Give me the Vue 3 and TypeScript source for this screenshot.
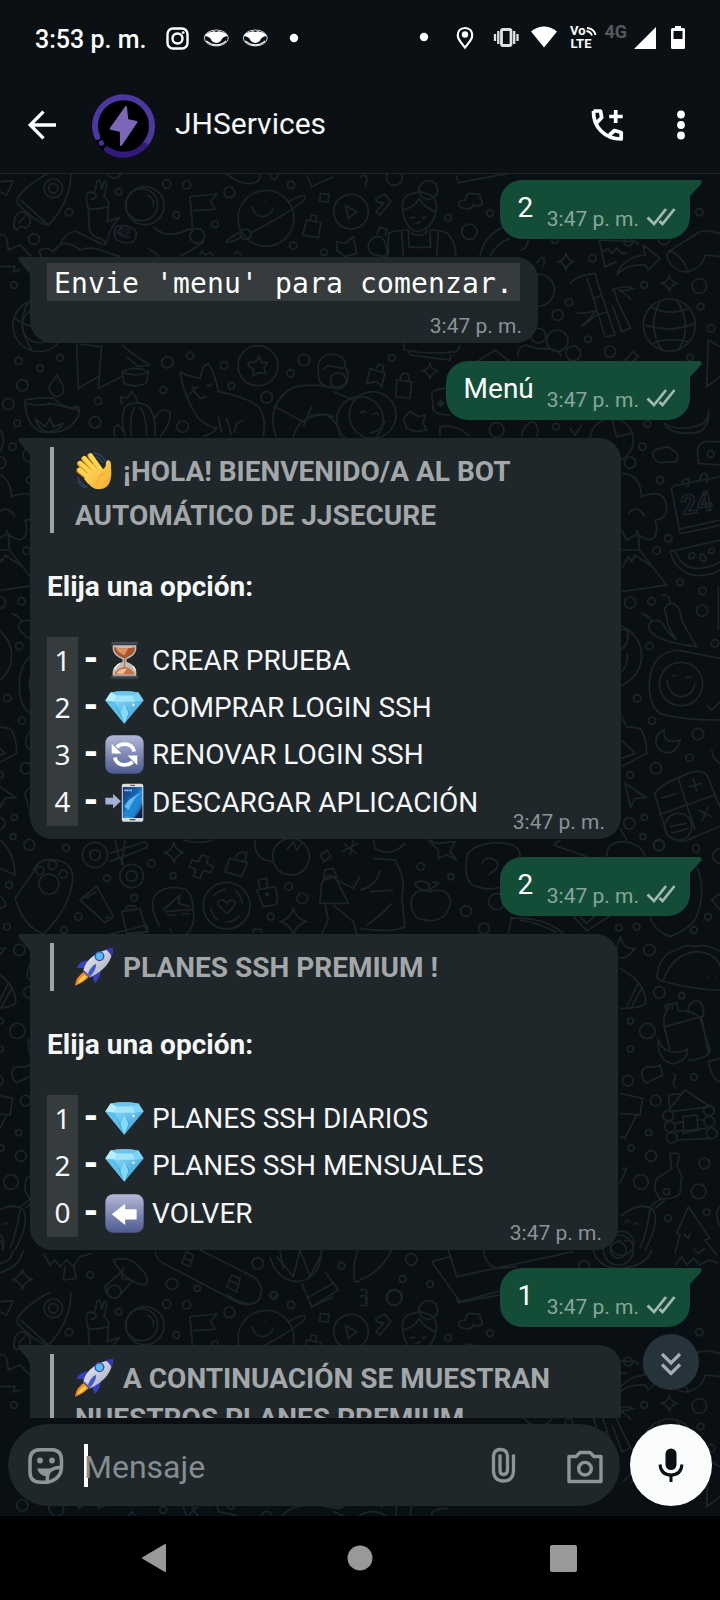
<script setup lang="ts">
interface Option { key: string; icon: string; label: string }
interface Message {
  id: number
  side: 'in' | 'out'
  kind: 'text' | 'code' | 'menu'
  text?: string
  width?: number
  quoteIcon?: string
  quote?: string[]
  tight?: boolean
  options?: Option[]
}
interface Doodle { x: number; y: number; circles: number[][]; d: string }

const time = '3:47 p. m.'

const viewBoxes: Record<string, string> = {
  wave: '226 62 116 120',
  hourglass: '314 632 116 118',
  gem: '313 774 119 119',
  refresh: '314 914 116 116',
  phone: '313 1055 116 116',
  back: '314 1058 116 116',
  rocket: '227 322 118 118',
}

const messages: Message[] = [
  { id: 1, side: 'out', kind: 'text', text: '2' },
  { id: 2, side: 'in', kind: 'code', text: "Envie 'menu' para comenzar.", width: 508 },
  { id: 3, side: 'out', kind: 'text', text: 'Menú' },
  {
    id: 4, side: 'in', kind: 'menu', width: 591, quoteIcon: 'wave',
    quote: ['¡HOLA! BIENVENIDO/A AL BOT', 'AUTOMÁTICO DE JJSECURE'],
    options: [
      { key: '1', icon: 'hourglass', label: 'CREAR PRUEBA' },
      { key: '2', icon: 'gem', label: 'COMPRAR LOGIN SSH' },
      { key: '3', icon: 'refresh', label: 'RENOVAR LOGIN SSH' },
      { key: '4', icon: 'phone', label: 'DESCARGAR APLICACIÓN' },
    ],
  },
  { id: 5, side: 'out', kind: 'text', text: '2' },
  {
    id: 6, side: 'in', kind: 'menu', width: 588, quoteIcon: 'rocket',
    quote: ['PLANES SSH PREMIUM !'],
    options: [
      { key: '1', icon: 'gem', label: 'PLANES SSH DIARIOS' },
      { key: '2', icon: 'gem', label: 'PLANES SSH MENSUALES' },
      { key: '0', icon: 'back', label: 'VOLVER' },
    ],
  },
  { id: 7, side: 'out', kind: 'text', text: '1' },
  {
    id: 8, side: 'in', kind: 'menu', width: 591, quoteIcon: 'rocket', tight: true,
    quote: ['A CONTINUACIÓN SE MUESTRAN', 'NUESTROS PLANES PREMIUM'],
  },
]

// Four-pointed sparkle centred on (x, y).
const spark = (x: number, y: number, r: number): string => {
  const k = r * 0.25
  return `M${x} ${y - r}Q${x + k} ${y - k} ${x + r} ${y}Q${x + k} ${y + k} ${x} ${y + r}Q${x - k} ${y + k} ${x - r} ${y}Q${x - k} ${y - k} ${x} ${y - r}Z`
}

// Wallpaper doodles, drawn at three units per pixel. These repeat down the page.
const repeating: Doodle[] = [
  {
    x: 0, y: 170,
    circles: [[500,42,12],[560,45,12],[356,65,10],[688,67,16],[645,163,10],[529,135,10],[207,127,11],[102,207,16],[880,227,11],[972,247,10],[873,45,11],[822,17,11],[160,55,14],[160,55,28],[425,104,48],[435,107,57],[798,145,84],[737,193,16],[1053,125,52],[592,198,22],[42,345,10],[343,5,20],[56,573,11],[120,595,10],[180,563,10],[67,646,17],[25,702,17],[294,693,11],[285,757,17],[51,760,10],[502,577,17],[570,557,11],[672,587,11],[490,660,10],[774,587,60],[694,647,10],[800,682,17],[872,610,11],[912,570,17],[548,770,17],[1080,750,70],[1015,632,24]],
    d: 'M55 80C70 60 110 25 150 8M212 8C215 60 190 120 145 165C120 165 70 120 52 100Q50 85 55 80M60 88L145 165M60 125Q40 140 45 150Q35 170 50 180Q65 160 75 175Q90 170 92 150Q85 130 60 125M55 160L75 140M265 115Q255 90 262 70Q275 60 290 75Q285 90 270 88M285 65L290 35Q297 25 303 40L305 60L312 35Q320 30 320 45L312 80Q330 90 325 110Q290 120 265 115L268 180Q275 200 300 205Q320 215 313 225M325 110L322 155L360 142Q340 160 330 185L315 225M350 170Q380 160 405 180Q415 195 400 215Q380 225 350 210Q335 190 350 170M460 170Q500 210 560 180Q580 170 575 190M612 215Q580 240 540 258M310 225L230 185Q200 180 180 225L160 245Q130 225 118 245L125 262M160 245Q190 200 240 240Q270 225 330 250L360 260M445 235L480 260M578 175L570 80L650 72L632 95L645 118L578 122M865 95Q920 65 915 85Q900 110 750 190M720 185Q670 215 680 218Q700 215 722 203M755 108Q765 140 790 140Q815 135 820 112M775 95v3M795 93v3M920 150L962 158L955 203L908 195ZM930 150L935 135L950 138L948 155M1038 108L1070 125L1045 145ZM1010 215L1035 220L1060 200L1070 250L1035 260L1010 240ZM962 70l25 3l-3 23l-25-3zM920 15L935 50L1000 20M680 12Q720 45 760 40Q785 30 780 12M0 35L40 32L20 75L0 65M0 195Q18 190 20 210L25 240L60 225L95 260M0 290L45 290L40 305L60 300M440 75Q465 85 460 110M600 255l5-12l10 12l15-8l10 10M700 255l10-10l15 10M235 522L300 530M230 522L235 655L295 620M305 525L295 655L365 620M365 525L410 560L448 585L415 590L380 560M366 605Q405 585 446 605Q405 625 366 605L372 640Q405 655 438 640L446 605M75 690Q120 680 165 685M75 690Q75 760 120 785Q170 795 210 770Q245 740 235 710Q200 720 165 690M80 700Q120 710 150 700L235 720M165 680Q140 660 150 645L170 615Q195 650 190 665Q185 680 165 680M105 745Q120 790 150 785Q180 780 190 760L160 770L150 745L135 770L105 745M375 800Q360 740 375 710Q400 690 440 705Q470 730 465 800M395 800Q385 740 405 710M440 800Q440 740 420 710M365 705L362 680L380 685L395 665L410 685L410 700M465 745Q480 710 510 725Q515 760 480 800M345 800Q335 770 355 765L375 790M540 605L560 615L600 625L610 590L625 580Q645 610 655 665M540 605Q545 640 560 680L585 730Q600 760 650 775Q640 790 610 800M655 665Q740 680 775 710Q800 740 790 800M575 650q10 10 20 0M620 645q10 8 15-5M560 685L580 660L600 685L620 680M655 740L665 790M680 745L695 795M730 750Q700 760 705 790M750 575l17 2l10-17l8 17l17 0l-10 17l5 17l-20-3l-17 8l0-20l-17-10zM955 600Q950 560 990 552Q1040 555 1035 590Q1050 610 1040 640Q1010 660 980 650Q950 640 955 600M970 600Q980 580 1000 590L1030 595M980 650Q940 640 890 650Q850 660 825 710L910 755M825 710Q810 760 830 800M1000 665L1060 690M910 755Q940 720 1000 740M935 710L910 770M880 800Q900 730 980 735Q1020 760 1020 800',
  },
  {
    x: 360, y: 170,
    circles: [[103,22,24],[205,60,28],[390,130,10],[265,143,10],[328,185,23],[805,215,13],[912,207,17],[697,265,11],[853,345,10],[1018,348,22],[627,397,11],[593,435,16],[684,508,10],[750,545,17],[1022,410,10],[928,465,78],[1053,475,11],[1018,127,11],[990,563,10],[535,497,22],[592,512,32],[640,550,22],[95,563,10],[38,735,70],[588,770,10],[410,780,22],[862,762,10],[535,360,48],[585,210,10],[755,810,65],[242,700,6]],
    d: 'M288 15L295 38L445 10M48 85L75 72L92 95L60 135L48 125L70 100L50 95ZM0 20Q20 10 22 30Q10 45 22 50M130 130Q120 85 145 75Q180 55 220 80Q235 105 225 135M130 120Q165 110 178 85Q190 110 225 125M130 130Q140 180 175 185Q215 175 225 135M150 140q8 8 15 0M185 140q8 8 15 0M165 158q8 5 15-3M155 185Q155 195 180 195Q200 195 200 180M85 255L85 190Q110 180 145 180L148 232L212 232L210 180Q240 180 262 190Q285 210 288 258M125 185L130 258M235 185L230 258M80 258Q20 260 25 225Q30 200 60 200Q85 215 80 258M50 195L60 172L80 178L75 198M300 110Q290 90 315 90Q320 65 345 72Q365 70 360 85Q370 90 365 105Q350 110 340 105Q330 125 300 110ZM360 258Q370 200 430 170M390 258Q410 220 450 205M480 240Q500 240 505 210M530 280Q560 240 550 290M718 210L735 290L770 275M730 245L745 235L755 250L770 235L785 250L800 250M718 210L830 215L835 225M770 315Q790 260 855 255L850 225L900 265L865 300L855 285Q800 280 770 315ZM920 250Q940 235 970 275L985 305Q960 310 935 285Q915 260 925 245L1020 185Q1040 180 1080 190M985 305Q1030 290 1035 255L1080 260M630 340Q650 315 705 310L715 345L765 495L735 500L690 350L680 325M700 385L728 375M715 435L742 425M760 355L775 400L812 475L785 485L757 405M755 360Q790 345 820 355Q800 365 775 360Q805 375 812 390M650 430Q690 430 710 420Q690 445 665 470Q690 450 715 430M870 410Q930 440 985 415M855 465Q930 490 1005 460M875 520Q930 500 985 515M900 395Q860 470 905 540M950 390Q1000 470 955 540M130 520L135 540Q200 555 290 545L300 525M148 545L150 555L270 570L272 555M350 575L405 540L450 575M475 560Q470 530 500 525Q530 540 560 535Q600 540 605 560M1045 510L1040 650L1080 620M1045 510L1080 530M790 575L820 545L835 560L810 580M30 595L75 610L65 650L50 635L20 640ZM50 595L55 582L70 588L68 605M110 630L155 635L150 685L108 680ZM120 628Q125 605 140 610Q150 615 145 632M265 655Q225 655 215 670L220 720Q230 735 270 735M230 700h24M242 688v24M130 745L150 725L175 740L195 735L190 760L200 780L165 785L140 775ZM0 730q10-12 20 0M38 735q10-12 20 0M30 790Q70 780 75 750M240 800V770Q290 760 330 800M485 800Q490 760 520 755Q540 770 530 800M630 775L645 795L665 765M755 745L770 800L815 790M910 760Q960 790 1030 760Q1050 740 1045 720M915 770Q960 800 1020 785Q1050 760 1045 730' + spark(618, 275, 22) + spark(928, 340, 22) + spark(210, 603, 22),
  },
]

const single: Doodle[] = [
  {
    x: 360, y: 430,
    circles: [[848,50,11],[810,98,17],[900,150,11],[925,325,11],[890,362,11],[960,457,10],[1028,483,11],[810,518,17],[874,514,11],[1026,542,17],[1065,640,11],[868,648,11],[832,805,11],[876,872,11],[963,762,65],[1014,912,17],[988,983,11],[888,1015,17],[810,1035,10],[808,1180,17],[853,1162,9],[849,1220,9],[897,1247,16],[750,677,95],[1052,72,10],[955,1190,40]],
    d: 'M880 80Q875 55 905 55Q925 45 940 62Q960 70 950 95Q920 95 905 98Q885 95 880 80M1080 35L1035 35Q1015 40 1012 60L1015 100L1080 105M960 310Q970 310 1080 285M960 310L935 180Q935 165 955 165L1080 140M965 165Q965 145 985 145Q990 165 980 170M1020 150Q1020 130 1035 130Q1050 145 1040 160M955 298L1080 270M785 130Q840 130 845 200Q920 170 920 240Q915 270 885 270Q900 320 870 330Q830 320 830 300M805 250Q830 220 855 260M785 300L800 330L835 310L838 360L920 465L785 485M785 360L838 360M785 415L805 380L815 395L825 375L870 405M930 365L1080 330M930 365Q950 430 1010 437Q1060 435 1080 420M945 365Q970 420 1020 415Q1060 410 1080 395M985 385q5-25 18-15q5 20-18 15M1022 370q18 5 15 22q-20 5-15-22M1045 370q0-15 15-15q10 15-15 15M845 550Q870 560 875 575Q850 590 890 620Q930 640 1010 650Q980 600 965 570Q960 520 930 520Q905 530 920 560Q920 590 950 630M905 495Q930 490 930 520M875 575Q900 560 920 600Q935 620 950 630M870 740Q880 670 950 660L1080 685M870 740Q860 820 900 850Q960 870 1080 870M920 750Q930 800 965 800Q1000 795 1005 760M935 740q8-10 18 0M978 745q8-10 18 0M1040 825L1055 840L1080 815M785 860L800 890L840 895Q860 920 860 970L785 1010M785 930L825 970L785 985M915 898Q885 910 888 940Q895 970 930 968Q955 960 960 930Q930 940 917 925Q908 910 915 898M795 1060L858 1103L825 1105L812 1132ZM885 1095Q880 1070 1000 1025Q1040 1020 1045 1045L1080 1130M885 1095L920 1210Q940 1235 970 1235L1080 1190M955 1045L1005 1200M895 1155L1065 1095M905 1105L950 1090M985 1070L1025 1060M1000 1045L1010 1085M1015 1140L1055 1160M1045 1130L1025 1175M930 1190L980 1180M935 1210L985 1195M1055 960Q1060 990 1080 1000M1075 470V600M780 600Q815 590 800 640L780 665M802 670Q805 710 780 730M780 1195L800 1230',
  },
  {
    x: 0, y: 840,
    circles: [[88,15,16],[198,23,10],[27,135,10],[147,132,30],[120,92,12],[157,75,13],[190,102,12],[285,45,16],[285,45,38],[395,108,16],[395,108,35],[454,70,11],[321,115,10],[403,173,10],[235,230,11],[192,270,10],[21,260,10],[519,107,9],[866,140,11],[907,175,16],[812,230,10],[680,197,70],[873,50,55],[802,163,4]],
    d: 'M45 175L100 95Q110 60 150 58Q215 60 218 110Q215 200 130 282Q70 260 45 175M330 40L435 5Q450 15 435 25L330 65M345 0L355 45L372 75M375 0L365 75M240 180L290 138L340 230L315 248ZM255 175L290 155M315 235l15-5M365 215L420 205L440 275L380 280ZM320 285L440 255L445 275L380 290M375 210Q380 190 410 200M480 260Q440 190 470 160Q510 130 560 150Q580 170 578 210Q590 250 560 282M490 210L540 165L535 190L570 200M495 215L575 208M500 225h30M545 222h25M510 265L515 280M575 60L595 65L605 45L625 50L620 70L640 80L632 98L610 92L600 115L580 108L588 88L568 80ZM690 55L742 68L725 110L675 95ZM705 55Q715 30 740 38L735 65M680 220L655 195Q650 180 665 180Q675 180 680 190Q690 175 703 183Q712 195 680 220M640 170Q655 148 680 148M720 225Q705 246 680 246M632 205Q640 235 655 240M728 190Q720 160 705 153M770 150L825 140Q840 185 825 195L790 200ZM780 148L775 120L800 115L802 143M765 0Q760 60 820 65M860 30L880 5L890 30L905 10M960 45l22-15l10 20l-20 15zM960 190L965 130Q990 90 1010 120L1045 190ZM975 192L985 240L965 282M1000 195L1060 245L1070 282M1010 120L1060 145L1080 110M975 90L1000 85L1010 110L970 120ZM1030 10l40 30M1060 0l-10 45M1025 35l50-25M0 0Q45 40 45 105L0 85M0 170Q20 180 15 200L0 205M760 280v-12h25v12M550 0Q600 15 640 0' + spark(522, 38, 28) + spark(880, 245, 38),
  },
  {
    x: 360, y: 840,
    circles: [[182,80,11],[273,110,9],[318,213,16],[372,265,16],[897,15,16],[1008,25,11],[1044,230,10],[777,263,10],[830,260,10],[1002,270,10],[868,330,17],[898,457,17],[965,467,9],[811,543,9],[862,573,23],[811,627,9],[803,722,16],[1002,711,10],[887,782,16],[866,878,9],[813,924,9],[873,948,16],[1033,970,16],[843,1026,22],[1016,1054,22],[924,1135,10],[1040,1117,10],[925,827,16],[930,860,16],[935,893,16],[1047,812,16],[1048,845,16],[1055,880,16],[920,1055,9],[1080,48,22],[410,185,24],[785,1210,36]],
    d: 'M40 55Q100 60 105 60Q140 120 125 170L135 260Q100 280 0 265M60 90Q50 140 0 150M30 155L100 150M95 190Q60 230 20 255M40 0L45 25Q90 55 135 10M205 0L230 10L285 5L270 35L290 60L260 45L235 55L235 30ZM320 55Q320 20 400 8Q470 5 480 40L470 120Q400 160 350 140Q310 130 320 55M365 75Q370 50 395 55Q420 65 410 85L385 105M210 155Q160 140 152 190Q160 240 190 238Q210 245 225 240Q265 235 272 180Q260 140 210 155M210 155L205 130Q170 115 165 135Q185 155 210 150L235 130L215 125M455 230L445 280M455 235Q550 230 610 280M480 240Q540 250 590 278M640 230L680 272L750 228M660 230L680 250L705 228M870 228Q880 270 930 290Q1000 260 1010 228Q1040 150 1010 80M580 15L680 50M580 15L600 0M740 50Q740 0 800 5Q850 20 855 50M1080 160L1055 180L1080 210M782 290Q765 330 770 350Q800 365 825 325Q790 330 782 290M890 410Q900 340 950 330Q980 310 1000 320Q1040 310 1080 335M890 410Q895 430 1050 450L1080 450M910 420Q940 340 1010 335Q1070 340 1080 380M1057 390v4M1045 412v4M1068 410v4M780 385Q860 430 857 490Q840 505 780 505M800 500L835 430M815 500L845 445M915 495L950 488L955 512Q1000 510 1020 535L1050 630Q1050 650 1000 660L985 660M915 495L920 515Q905 535 915 570L930 630M915 560L1025 530L1045 640M985 520Q980 490 1010 482Q1035 490 1030 530M925 495V510M937 492V508M895 600Q890 660 940 672Q985 660 982 628Q940 650 905 620ZM845 695Q855 675 880 682L900 675L908 705L860 728Q845 720 845 695M940 700Q950 710 943 720Q935 735 950 745M970 760L925 765L930 805L975 750L1050 800L930 815M970 830L1010 825L1015 870L970 880ZM945 850L970 845M1015 840L1035 840M950 900L1050 895M945 875L1040 865M780 760L848 775L840 825L780 820M830 825L795 895L780 890M1080 655L1045 665Q1055 720 1080 725M930 940L955 940Q960 960 950 975L965 1010L960 1060Q945 1080 900 1075Q875 1050 890 1015L915 1000L935 985ZM905 1075L870 1100M915 1080L885 1105M780 1130Q840 1080 880 1110Q900 1150 855 1230M870 1110Q860 1180 840 1225M795 1150q8-20 15 0M820 1155q8-15 15 0M770 1205q8-10 14 0M792 1205q8-10 14 0M985 1100L1050 1195L1035 1200L1070 1245M985 1100L950 1180L960 1185L945 1240M970 1180L985 1195L990 1180M1000 1225L1015 1240L1035 1225M785 985L800 985L780 1030M1080 1100Q1060 1120 1080 1160',
  },
  {
    x: 0, y: 1250,
    circles: [[271,75,10],[516,102,17],[592,115,9],[773,40,17],[820,135,10],[1025,47,10]],
    d: 'M130 10L150 45L165 30L180 50L200 30L220 50L240 20L275 10M195 50L190 90L228 85L222 50M340 30Q400 10 440 80Q445 100 435 105Q380 100 345 40ZM370 60L315 110Q320 145 350 145L400 90M370 50L365 85L395 90M465 5Q470 30 490 40L720 160Q780 175 785 120Q780 90 750 75L600 0M545 40L560 5L580 15L570 50ZM680 110L695 75L720 85L710 125ZM550 25l25 8M687 92l25 10M810 20Q830 90 890 95Q960 90 965 0M830 20L880 80L900 0L930 80L960 20M905 100L935 170L1015 120L975 65M920 145L1000 100M840 0L850 60M0 68Q60 50 70 0M0 40Q35 35 40 0M1075 0Q1055 50 1065 95H1080' + spark(67, 88, 28),
  },
  {
    x: 360, y: 1250,
    circles: [[154,28,17],[128,87,10],[210,103,10],[103,143,22],[775,0,24],[775,0,45],[672,48,16]],
    d: 'M215 35L300 155L430 120M215 35L270 20M265 0L290 80L640 5M370 0Q375 50 420 55L470 50M700 0Q710 50 775 55Q860 50 875 0M0 90Q60 70 95 0M945 45L965 20L980 45L1000 25L1020 45L1045 30L1075 40M0 120Q15 115 22 125Q10 140 22 160Q15 170 0 165',
  },
]
</script>

<template>
  <div class="screen">
    <svg class="defs" width="0" height="0" aria-hidden="true">
      <defs>
        <linearGradient id="btn" x1="0" y1="0" x2="0" y2="1"><stop offset="0" stop-color="#b3b9d6" /><stop offset=".5" stop-color="#8089b4" /><stop offset="1" stop-color="#4d5b91" /></linearGradient>
        <linearGradient id="sky" x1="0" y1="0" x2="1" y2="1"><stop offset="0" stop-color="#17356f" /><stop offset=".45" stop-color="#1769b8" /><stop offset=".6" stop-color="#3a9fe0" /><stop offset="1" stop-color="#0b2450" /></linearGradient>
        <linearGradient id="skin" x1="0" y1="0" x2="1" y2="1"><stop offset="0" stop-color="#ffe16a" /><stop offset="1" stop-color="#f7a928" /></linearGradient>
        <linearGradient id="hull" x1="0" y1="0" x2="1" y2="1"><stop offset="0" stop-color="#f4f6fa" /><stop offset="1" stop-color="#9da3b4" /></linearGradient>
        <linearGradient id="ice" x1="0" y1="0" x2="1" y2="1"><stop offset="0" stop-color="#a9e8fb" /><stop offset="1" stop-color="#2b9ad8" /></linearGradient>
      </defs>
      <symbol id="wave" :viewBox="viewBoxes.wave">
        <path d="M284 68Q306 72 317 92M292 80Q304 86 310 98M233 143Q240 164 262 173M233 156Q240 170 254 175" fill="none" stroke="#3c5f9e" stroke-width="2.6" stroke-linecap="round" />
        <path d="M237 122L275 152M239 101L285 142M252 86L295 134M271 77L305 125" stroke="#e69a23" stroke-width="17" stroke-linecap="round" />
        <path d="M238 120L275 150M240 99L285 140M253 84L295 132M272 76L305 123" stroke="#ffd64f" stroke-width="13" stroke-linecap="round" />
        <path d="M310 118Q320 112 319 98Q321 89 329 91Q336 94 335 112Q338 132 333 152Q326 180 296 180Q275 179 252 148Q280 110 310 118Z" fill="url(#skin)" />
        <path d="M292 160Q292 140 316 130" fill="none" stroke="#eda12b" stroke-width="3" />
      </symbol>
      <symbol id="hourglass" :viewBox="viewBoxes.hourglass">
        <path d="M337 644H407Q414 673 378 687V695Q414 709 407 738H337Q330 709 366 695V687Q330 673 337 644Z" fill="#c3bebb" />
        <path d="M340 651Q372 658 404 651Q406 672 372 686Q338 672 340 651Z" fill="#a8562c" /><path d="M346 652Q366 656 384 653L372 675Q350 668 346 652Z" fill="#dc9260" />
        <path d="M370 686h4v24Q398 716 402 733H342Q347 716 370 710Z" fill="#c27446" /><path d="M354 722Q366 714 380 717L368 731H348Z" fill="#efc09c" />
        <path d="M342 718Q346 706 358 700M398 708Q404 714 404 722" fill="none" stroke="#f4f4f4" stroke-width="4" />
        <rect x="330" y="634" width="84" height="11" rx="4" fill="#353b42" /><rect x="330" y="737" width="84" height="11" rx="4" fill="#353b42" />
        <path d="M333 638h78M333 740h78" stroke="#69727c" stroke-width="2" />
      </symbol>
      <symbol id="gem" :viewBox="viewBoxes.gem">
        <path d="M330 788Q372 780 415 788L431 812L372 883L314 812Z" fill="url(#ice)" />
        <path d="M330 788Q372 780 415 788L398 797H348Z" fill="#6cc5ec" /><path d="M330 788L348 797L342 816L314 812Z" fill="#b8effd" />
        <path d="M415 788L398 797L404 816L431 812Z" fill="#7ed4f6" /><path d="M348 797H398L404 816H342Z" fill="#a2e4fa" />
        <path d="M342 816L372 883L314 812Z" fill="#5cc0ec" /><path d="M342 816L360 850L372 818L388 850L404 816L372 883Z" fill="#2c9edb" /><path d="M372 818L360 850L372 883L385 850Z" fill="#86d9f7" />
        <path d="M396 820l9 6l-7 4z" fill="#fff" />
      </symbol>
      <symbol id="refresh" :viewBox="viewBoxes.refresh">
        <rect x="315" y="915" width="114" height="114" rx="23" fill="url(#btn)" />
        <path d="M341 986A33 33 0 0 1 392 946M403 958A33 33 0 0 1 352 1001" fill="none" stroke="#fff" stroke-width="0" />
        <path d="M401 963Q396 941 372 941Q358 941 349 950M343 981Q349 1003 372 1003Q387 1003 396 994" fill="none" stroke="#fff" stroke-width="11" />
        <path d="M334 940V969H363ZM410 1004V975H381Z" fill="#fff" />
      </symbol>
      <symbol id="phone" :viewBox="viewBoxes.phone">
        <path d="M314 1099H337V1087L360 1109L337 1131V1119H314Z" fill="#a8afd4" />
        <rect x="363" y="1057" width="64" height="113" rx="6" fill="#d9dde0" /><rect x="366" y="1067" width="58" height="92" fill="url(#sky)" />
        <path d="M366 1150Q380 1115 424 1085Q417 1125 395 1158Z" fill="#1f86d6" /><path d="M370 1125Q385 1098 418 1085Q395 1105 384 1135Z" fill="#5cbcf2" /><path d="M400 1159Q420 1140 424 1118V1159Z" fill="#0a2149" />
        <rect x="386" y="1162" width="18" height="4" rx="2" fill="#444" /><path d="M388 1062h14" stroke="#444" stroke-width="3" />
        <path d="M371 1077h23" stroke="#b8d6f4" stroke-width="5" stroke-dasharray="4 2" />
      </symbol>
      <symbol id="back" :viewBox="viewBoxes.back">
        <rect x="315" y="1059" width="114" height="114" rx="23" fill="url(#btn)" />
        <path d="M334 1118L374 1087V1103H408V1134H374V1150Z" fill="#fff" />
      </symbol>
      <symbol id="rocket" :viewBox="viewBoxes.rocket">
        <path d="M254 397Q230 412 227 439Q256 428 270 411Z" fill="#f28a1f" /><path d="M255 406Q240 418 235 432Q252 425 262 412Z" fill="#ffd34d" />
        <path d="M270 362Q246 360 231 384L260 387ZM305 391Q304 417 287 431L277 404Z" fill="#3740c0" />
        <path d="M252 393Q264 342 341 326Q340 383 272 414Z" fill="url(#hull)" />
        <path d="M318 329Q330 325 342 325Q343 339 337 352Q333 337 318 329Z" fill="#3336b5" />
        <circle cx="301" cy="350" r="15" fill="#3649b5" /><circle cx="301" cy="350" r="11" fill="#50bdf0" />
        <path d="M266 403Q275 381 291 373Q292 391 273 411Z" fill="#4259ce" /><path d="M252 393L272 414" stroke="#5256a8" stroke-width="5" />
      </symbol>
    </svg>

    <header class="top">
      <div class="status">
        <span class="clock">3:53 p. m.</span>
        <svg width="140" height="36" viewBox="162 20 140 36">
          <rect x="167.5" y="28.5" width="20" height="20" rx="5.5" fill="none" stroke="#fff" stroke-width="2.4" />
          <circle cx="177.5" cy="38.5" r="5" fill="none" stroke="#fff" stroke-width="2.4" /><circle cx="183.2" cy="32.6" r="1.4" fill="#fff" />
          <g v-for="x in [216.3, 255.3]" :key="x" :transform="`translate(${x} 38)`">
            <ellipse rx="12" ry="8" fill="none" stroke="#dfe3e5" stroke-width=".9" />
            <path d="M-11.500-2Q-9-6-5-6Q-3-7.500 0-6Q3-7.500 5-6Q9-6 11.500-2Q6-1.500 4.500 3Q2 5 0 5Q-2 5-4.500 3Q-6-1.500-11.500-2Z" fill="#fff" />
            <path d="M-10 3Q-5 7 0 7Q5 7 10 3" fill="none" stroke="#fff" stroke-width="1.400" />
          </g>
          <circle cx="294" cy="38" r="4.2" fill="#fff" />
        </svg>
        <svg class="system" width="268" height="36" viewBox="419 20 268 36" fill="#fff">
          <circle cx="424" cy="37" r="4.2" />
          <path d="M465 28C460 28 457.800 31.700 457.800 35.500C457.800 40 462 43.500 465 47.500C468 43.500 472.200 40 472.200 35.500C472.200 31.700 470 28 465 28Z" fill="none" stroke="#fff" stroke-width="2.200" /><circle cx="465" cy="34.500" r="3.200" />
          <g fill="none" stroke="#dfe2e3"><rect x="501.500" y="29.500" width="9.500" height="16" rx="1.500" stroke-width="2.800" /><path d="M498.300 31V44M514.200 31V44" stroke-width="2.300" /><path d="M495 34V41M517.500 34V41" stroke-width="2.300" /></g>
          <path d="M531 31.500Q544 21.500 557 31.500L544 47.500Z" />
          <g class="volte"><text x="570" y="35">Vo</text><text x="570.500" y="48">LTE</text></g>
          <path d="M586.500 31Q590.500 31.500 592 35.500M587 28Q594 28.500 595.500 35" fill="none" stroke="#fff" stroke-width="1.800" />
          <text class="net" x="604.500" y="37.500">4G</text>
          <path d="M634 49L656 27V49Z" />
          <path fill-rule="evenodd" d="M675 28V26H681V28H683.500Q685 28 685 29.500V47.500Q685 49 683.500 49H672.500Q671 49 671 47.500V29.500Q671 28 672.500 28ZM673.500 31V39H682.500V31Z" />
        </svg>
      </div>
      <div class="appbar">
        <svg class="arrow" width="30" height="30" viewBox="27 110 30 30" fill="none" stroke="#fff" stroke-width="3.300"><path d="M56 125H31M43.500 111.700L30.200 125L43.500 138.300" /></svg>
        <svg class="avatar" width="64" height="64" viewBox="91 94 64 64">
          <circle cx="123" cy="126" r="31.500" fill="#000" />
          <path d="M97.300 137A28.500 28.500 0 1 1 145 144.500" fill="none" stroke="#4c38a0" stroke-width="6" stroke-linecap="round" />
          <path d="M107 149.500A28.500 28.500 0 0 0 144.500 145.500" fill="none" stroke="#34197c" stroke-width="6" stroke-linecap="round" />
          <circle cx="101.300" cy="143" r="2.700" fill="#4c2f9c" />
          <path d="M126 107L110.700 128.700L120.800 131L121 145L136.500 122L127.300 120Z" fill="#7b66b8" stroke="#7b66b8" stroke-width="2" stroke-linejoin="round" />
        </svg>
        <h1>JHServices</h1>
        <svg class="call" width="34" height="34" viewBox="590 108 34 34" fill="none" stroke="#fff" stroke-width="3.700">
          <path d="M593.500 111H600.500L601.700 117.500L597 122.500M593.500 111C593 127 605 139 621.200 139V132.500L614.500 130.500L609.500 135" stroke-linejoin="round" /><path d="M615.700 110V123M609.200 116.500H622.700" />
        </svg>
        <svg width="10" height="30" viewBox="676 110 10 30" fill="#fff"><circle cx="681" cy="114.500" r="3.900" /><circle cx="681" cy="125" r="3.900" /><circle cx="681" cy="135.500" r="3.900" /></svg>
      </div>
    </header>

    <main class="conversation">
      <svg class="wallpaper" width="720" height="1342" viewBox="0 174 720 1342" aria-hidden="true">
        <defs>
          <g id="repeat">
            <g v-for="(g, i) in repeating" :key="i" class="doodles" :transform="`translate(${g.x} ${g.y}) scale(.33333)`">
              <circle v-for="(c, n) in g.circles" :key="n" :cx="c[0]" :cy="c[1]" :r="c[2]" />
              <path :d="g.d" />
            </g>
            <text class="scribble" transform="translate(115 235) rotate(14)">42</text>
          </g>
          <g id="tile">
            <use href="#repeat" /><use href="#repeat" y="1120" />
            <g v-for="(g, i) in single" :key="i" class="doodles" :transform="`translate(${g.x} ${g.y}) scale(.33333)`">
              <circle v-for="(c, n) in g.circles" :key="n" :cx="c[0]" :cy="c[1]" :r="c[2]" />
              <path :d="g.d" />
            </g>
            <text class="scribble big" transform="translate(683 515) rotate(-10)">24</text>
          </g>
          <clipPath id="edge"><rect x="0" y="430" width="30" height="410" /><rect x="0" y="935" width="30" height="315" /></clipPath>
        </defs>
        <use href="#tile" />
        <g clip-path="url(#edge)"><use href="#tile" x="-630" /></g>
        <circle cx="39" cy="325.600" r="26" /><circle cx="39" cy="325.600" r="17" /><path d="M14 318Q38 335 64 322M28 303Q15 325 32 350" />
      </svg>

      <section class="messages">
        <article v-for="m in messages" :key="m.id" class="bubble" :class="[m.side, m.kind]" :style="m.width ? { width: m.width + 'px' } : undefined">
          <p v-if="m.kind === 'text'" class="plain">{{ m.text }}</p>
          <div v-else-if="m.kind === 'code'" class="body"><code>{{ m.text }}</code></div>
          <div v-else class="body">
            <blockquote :class="{ tight: m.tight, multi: (m.quote?.length ?? 0) > 1 }">
              <p v-for="(line, i) in m.quote" :key="line">
                <svg v-if="i === 0" width="39" height="39"><use :href="'#' + m.quoteIcon" /></svg>{{ line }}
              </p>
            </blockquote>
            <template v-if="m.options">
              <p class="prompt">Elija una opción:</p>
              <ul>
                <li v-for="o in m.options" :key="o.key">
                  <span class="key">{{ o.key }}</span><b>-</b>
                  <svg width="39" height="39"><use :href="'#' + o.icon" /></svg>
                  <span class="label">{{ o.label }}</span>
                </li>
              </ul>
            </template>
          </div>
          <time>{{ time }}</time>
          <svg v-if="m.side === 'out'" class="ticks" width="30" height="20" viewBox="0 0 30 20"><path d="M1.500 10.500L8 17L20 2M13.500 14L16.500 17L28.500 2" /></svg>
        </article>
      </section>

      <button class="jump" aria-label="Bajar">
        <svg width="24" height="26" viewBox="0 0 24 26"><path d="M3 3L12 12L21 3M3 13.500L12 22.500L21 13.500" /></svg>
      </button>

      <footer class="composer">
        <div class="field">
          <svg class="sticker" width="36" height="37" viewBox="28 1449 36 37" fill="none" stroke="#8d9598" stroke-width="3.500">
            <path d="M61.500 1467.500V1461Q61.500 1450.700 51 1450.700H40.500Q30 1450.700 30 1461V1473Q30 1483.300 40.500 1483.300H47.500Q61.500 1480 61.500 1467.500ZM47.500 1483Q46.500 1474 51 1471Q55 1468 61.500 1468.500" />
            <circle cx="40" cy="1461.500" r="2.900" fill="#8d9598" stroke="none" /><circle cx="52" cy="1461.500" r="2.900" fill="#8d9598" stroke="none" />
            <path d="M37 1469.500H53Q47 1472 47 1477.500Q39.500 1477 37 1469.500Z" fill="#8d9598" stroke="none" />
          </svg>
          <span class="caret"></span>
          <span class="hint">Mensaje</span>
          <svg class="clip" width="26" height="37" viewBox="490 1448 26 37" fill="none" stroke="#8d9598" stroke-width="3.300">
            <path d="M513.500 1455.500V1472Q513 1482 503.500 1482Q494 1482 493.500 1472V1457Q494 1450.500 500.500 1450.500Q507 1450.500 507.500 1457V1471.500Q507 1475.500 503.500 1475.500Q500 1475.500 500 1471.500V1455.500" />
          </svg>
          <svg width="36" height="34" viewBox="567 1450 36 34" fill="none" stroke="#8d9598" stroke-width="3.400">
            <path d="M569 1456.500H576L580 1452.500H590L594 1456.500H601V1481.500H569Z" stroke-linejoin="round" /><circle cx="585" cy="1468.700" r="6.300" />
          </svg>
        </div>
        <button class="mic" aria-label="Grabar">
          <svg width="28" height="36" viewBox="657 1448 28 36"><rect x="665.500" y="1449.500" width="11" height="21.500" rx="5.500" fill="#0b1014" /><path d="M660 1465.500Q661 1476 671 1476Q681 1476 682 1465.500M671 1476V1483" fill="none" stroke="#0b1014" stroke-width="3" /></svg>
        </button>
      </footer>
    </main>

    <nav class="keys">
      <svg width="26" height="30" viewBox="0 0 26 30"><path d="M24 2V28L2 15Z" stroke="#999" stroke-width="2" stroke-linejoin="round" /></svg>
      <svg class="home" width="26" height="26" viewBox="0 0 26 26"><circle cx="13" cy="13" r="12.500" /></svg>
      <svg width="27" height="27" viewBox="0 0 27 27"><rect width="27" height="27" rx="2" /></svg>
    </nav>
  </div>
</template>

<style>
html, body { margin: 0; background: #000; }
</style>

<style scoped>
.screen { width: 720px; height: 1600px; display: flex; flex-direction: column; overflow: hidden; background: #0b1014; color: #f4f6f7; font-family: Roboto, "Liberation Sans", sans-serif; font-size: 28px; }
.defs { position: absolute; }
svg { display: block; flex: none; }
p, h1, ul, blockquote { margin: 0; padding: 0; list-style: none; }
button { border: 0; padding: 0; display: flex; align-items: center; justify-content: center; }
.top { height: 173px; flex: none; border-bottom: 1px solid #20262a; box-sizing: content-box; }
.status { height: 77px; display: flex; align-items: center; padding: 0 33px 0 35px; }
.status > svg { margin-bottom: 1px; }
.clock { width: 127px; font-size: 25px; font-weight: 500; color: #fff; line-height: 30px; padding-top: 3px; white-space: nowrap; }
.system { margin-left: auto; }
.volte text { font: 700 13px Roboto, sans-serif; }
.net { font: 700 18px Roboto, sans-serif; fill: #55595c; }
.appbar { height: 96px; display: flex; align-items: center; padding: 0 34px 0 27px; box-sizing: border-box; }
.appbar .avatar { margin-left: 34px; margin-top: 2px; }
.appbar h1 { margin-left: 20px; margin-bottom: 2px; font-size: 30px; font-weight: 400; line-height: 36px; }
.appbar .call { margin-left: auto; margin-right: 52px; }
.conversation { position: relative; height: 1342px; display: flex; flex-direction: column; background: #0a0f13; }
.wallpaper { position: absolute; inset: 0; fill: none; stroke: #1d2428; stroke-width: 1.700; }
.doodles { stroke-width: 5.200; }
.scribble { font: 700 13px Roboto, sans-serif; stroke-width: .8; }
.scribble.big { font-size: 27px; stroke-width: 1.500; }
.messages { position: relative; height: 1244px; box-sizing: border-box; padding: 6px 30px 0; display: flex; flex-direction: column; align-items: flex-start; gap: 18px; overflow: hidden; }
.bubble { position: relative; flex: none; box-sizing: border-box; border-radius: 22px; }
.bubble::before { content: ""; position: absolute; top: 0; width: 14px; height: 19px; }
.bubble time { font-size: 21px; line-height: 24px; white-space: nowrap; }
.in { display: grid; background: #1f272a; border-top-left-radius: 0; }
.in::before { left: -12px; background: #1f272a; clip-path: path("M2 0H14V19H12V17L1 4Q-1 0 2 0Z"); }
.in > * { grid-area: 1 / 1; }
.in time { place-self: end; margin: 0 16px 5px 0; color: #8b9396; }
.code { height: 86px; }
.code .body { padding: 6px 0 0 17px; }
code { display: block; width: 473px; height: 38px; box-sizing: border-box; padding-left: 7px; background: #363b3e; font: 28px/41px "DejaVu Sans Mono", monospace; letter-spacing: .14px; color: #fff; white-space: pre; }
.menu .body { padding: 9px 0 13px 17px; }
blockquote { height: 48px; box-sizing: border-box; margin-left: 3px; padding-top: 3px; border-left: 4px solid #a0a3a5; font-weight: 700; color: #a3a7a9; }
blockquote.multi { height: 86px; }
blockquote p { display: flex; align-items: center; height: 44px; padding-left: 21px; line-height: 44px; white-space: nowrap; }
blockquote svg { margin: 0 9px 3px 0; }
blockquote.tight p + p { margin-top: -4px; }
.prompt { height: 104px; box-sizing: border-box; padding-top: 3px; line-height: 102px; font-weight: 700; }
li { display: flex; align-items: center; height: 47px; line-height: 47px; }
li:last-child { height: 48px; padding-bottom: 0; }
.key { width: 31px; align-self: stretch; background: #363b3e; text-align: center; font-family: "Noto Sans", sans-serif; font-size: 28px; line-height: 46px; }
li b { width: 27px; box-sizing: border-box; padding-left: 6px; margin-bottom: 5px; font: 700 33px/42px "DejaVu Sans", sans-serif; color: #fff; }
li .label { margin-left: 8px; white-space: nowrap; }
.out { align-self: flex-end; min-width: 190px; display: flex; align-items: flex-end; height: 59px; padding: 0 14px 0 17.500px; background: #144d37; color: #fff; border-top-right-radius: 0; }
.out::before { right: -12px; background: #144d37; clip-path: path("M0 0H12Q15 1 13 4L2 16V19H0Z"); }
.out .plain { line-height: 34px; margin-bottom: 14px; }
.out time { margin: 0 7px 8px auto; padding-left: 13px; color: #89a69b; }
.ticks { margin-bottom: 12px; fill: none; stroke: #a3b9b0; stroke-width: 2.800; }
.jump { position: absolute; left: 643px; top: 1160px; width: 56px; height: 56px; border-radius: 50%; background: #26333b; }
.jump svg { fill: none; stroke: #a3adb2; stroke-width: 3.200; margin-top: 3px; }
.composer { position: relative; height: 98px; box-sizing: border-box; padding: 6px 8px 10px; display: flex; gap: 10px; }
.field { width: 612px; height: 82px; box-sizing: border-box; border-radius: 41px; background: #1f272a; display: flex; align-items: center; padding: 3px 17px 0 20px; }
.caret { width: 4px; height: 43px; margin-left: 20px; margin-bottom: 2px; background: #fff; }
.hint { margin-left: -4px; font-size: 32px; line-height: 40px; color: #858d90; }
.clip { margin-left: auto; margin-right: 51px; margin-bottom: 2px; }
.mic { width: 82px; height: 82px; flex: none; border-radius: 50%; background: #fafbfb; }
.keys { height: 84px; display: flex; align-items: center; justify-content: space-between; padding: 0 143px 0 141px; background: #000; fill: #999; }
.home { margin-left: 3px; }
</style>
